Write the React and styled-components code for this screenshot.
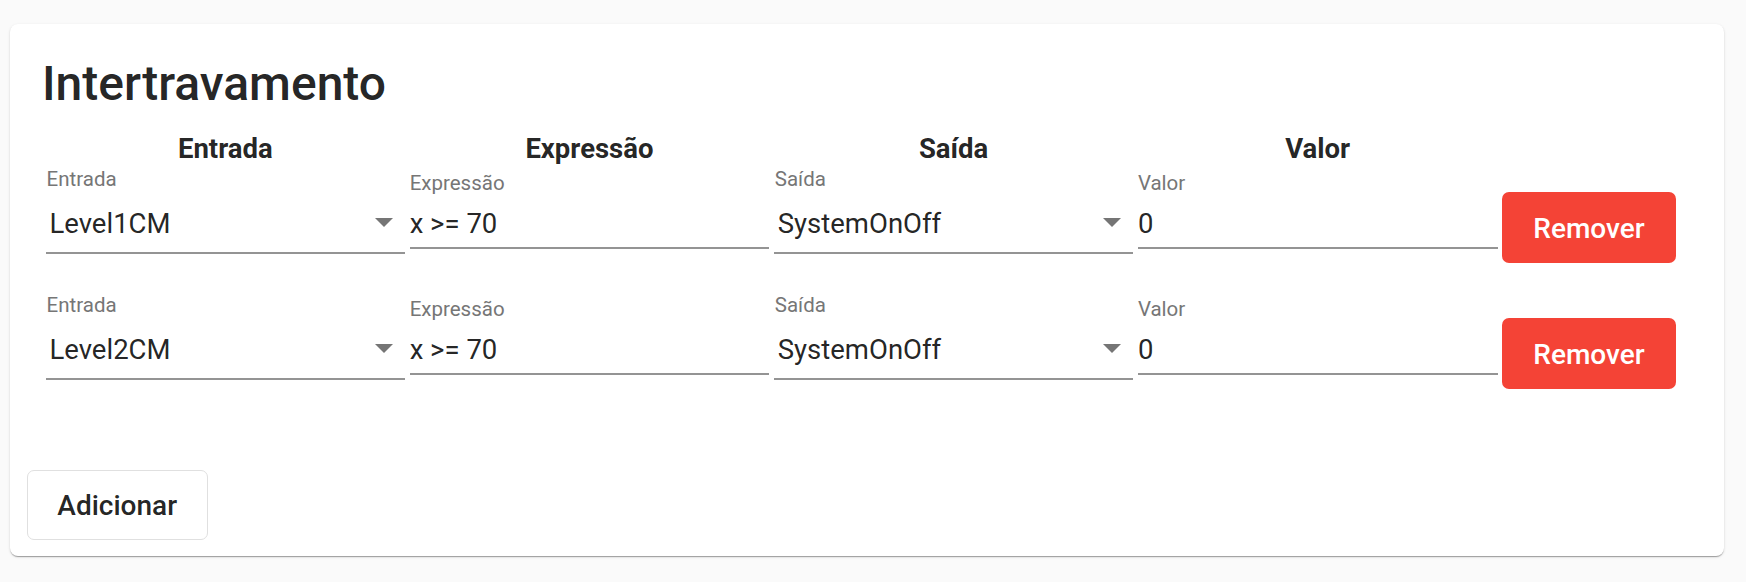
import React, { useState } from "react";
import styled, { createGlobalStyle } from "styled-components";

const GlobalStyle = createGlobalStyle`
  body {
    margin: 0;
    background-color: #fafafa;
    font-family: Roboto, "Liberation Sans", sans-serif;
    color: rgba(0, 0, 0, 0.87);
  }
`;

const Page = styled.div`
  padding: 24px 22px 26px 10px;
`;

const Card = styled.div`
  background-color: #fff;
  border-radius: 8px;
  box-shadow: 0 2px 1px -1px rgba(0, 0, 0, 0.2), 0 1px 1px 0 rgba(0, 0, 0, 0.14),
    0 1px 3px 0 rgba(0, 0, 0, 0.12);
  height: 532px;
  display: flex;
  flex-direction: column;
`;

const Title = styled.h3`
  margin: 32px 0 0 32px;
  font-size: 48px;
  line-height: 56px;
  font-weight: 500;
`;

const Table = styled.div`
  padding: 0 48px 0 35.5px;
  margin-top: 20.6px;
`;

const Grid = styled.div`
  display: grid;
  grid-template-columns: repeat(4, 1fr) 174px;
  column-gap: 4.5px;
  align-items: start;
`;

const HeadRow = styled(Grid)`
  height: 32px;
`;

const Head = styled.div`
  text-align: center;
  font-size: 27.5px;
  line-height: 32px;
  font-weight: 700;
`;

const Row = styled(Grid)`
  height: 126px;
`;

const Field = styled.div`
  display: flex;
  flex-direction: column;
  margin-top: ${({ $select }) => ($select ? "2.9px" : "6.9px")};
  border-bottom: 2px solid #949494;
  padding-bottom: ${({ $select }) => ($select ? "12.4px" : "7.4px")};
`;

const Label = styled.label`
  font-size: 20.5px;
  line-height: 24px;
  color: #767676;
  padding-left: ${({ $select }) => ($select ? "1px" : "0")};
`;

const ValueLine = styled.div`
  display: flex;
  align-items: center;
  margin-top: ${({ $select }) => ($select ? "16.1px" : "12.1px")};
  padding-left: ${({ $select }) => ($select ? "4px" : "0")};
  padding-right: 12px;
`;

const Value = styled.span`
  flex: 1;
  font-size: 27.5px;
  line-height: 32px;
  color: rgba(0, 0, 0, 0.87);
`;

const Arrow = styled.svg`
  width: 18px;
  height: 9px;
  fill: #757575;
  margin-top: -3px;
`;

const Button = styled.button`
  font-family: inherit;
  font-size: 28px;
  font-weight: 500;
  border-radius: 7px;
  cursor: pointer;
`;

const RemoveButton = styled(Button)`
  margin-top: 27.7px;
  width: 174px;
  height: 71px;
  padding-top: 3px;
  border: none;
  background-color: #f44336;
  color: #fff;
`;

const Actions = styled.div`
  margin-top: auto;
  padding: 0 0 16px 16.7px;
`;

const AddButton = styled(Button)`
  width: 181px;
  height: 70px;
  border: 1px solid #e0e0e0;
  background-color: #fff;
  color: rgba(0, 0, 0, 0.87);
`;

function SelectField({ label, value }) {
  return (
    <Field $select>
      <Label $select>{label}</Label>
      <ValueLine $select>
        <Value>{value}</Value>
        <Arrow viewBox="7 10 10 5">
          <path d="M7 10l5 5 5-5z" />
        </Arrow>
      </ValueLine>
    </Field>
  );
}

function TextField({ label, value }) {
  return (
    <Field>
      <Label>{label}</Label>
      <ValueLine>
        <Value>{value}</Value>
      </ValueLine>
    </Field>
  );
}

export default function App() {
  const [rules, setRules] = useState([
    { entrada: "Level1CM", expr: "x >= 70", saida: "SystemOnOff", valor: "0" },
    { entrada: "Level2CM", expr: "x >= 70", saida: "SystemOnOff", valor: "0" },
  ]);

  return (
    <>
      <GlobalStyle />
      <Page>
        <Card>
          <Title>Intertravamento</Title>
          <Table>
            <HeadRow>
              <Head>Entrada</Head>
              <Head>Expressão</Head>
              <Head>Saída</Head>
              <Head>Valor</Head>
            </HeadRow>
            {rules.map((r, i) => (
              <Row key={i}>
                <SelectField label="Entrada" value={r.entrada} />
                <TextField label="Expressão" value={r.expr} />
                <SelectField label="Saída" value={r.saida} />
                <TextField label="Valor" value={r.valor} />
                <RemoveButton
                  onClick={() => setRules(rules.filter((_, j) => j !== i))}
                >
                  Remover
                </RemoveButton>
              </Row>
            ))}
          </Table>
          <Actions>
            <AddButton>Adicionar</AddButton>
          </Actions>
        </Card>
      </Page>
    </>
  );
}
